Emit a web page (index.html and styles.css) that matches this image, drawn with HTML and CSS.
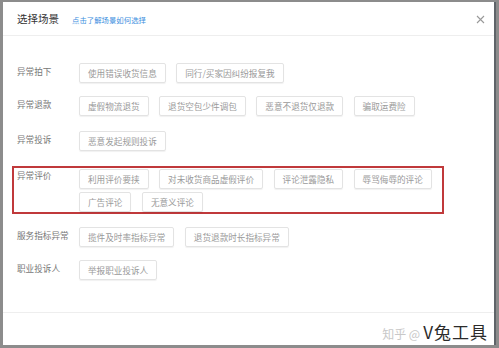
FILE: index.html
```html
<!DOCTYPE html>
<html lang="zh">
<head>
<meta charset="utf-8">
<link rel="stylesheet" href="styles.css">
</head>
<body>
<div class="modal">
  <div class="header">
    <span class="title">选择场景</span>
    <a class="help">点击了解场景如何选择</a>
    <span class="close">
      <svg width="9" height="9" viewBox="0 0 9 9"><path d="M1 1L8 8M8 1L1 8" stroke="#999" stroke-width="1.1" fill="none"/></svg>
    </span>
  </div>
  <div class="content">
    <div class="row">
      <div class="label">异常拍下</div>
      <div class="btns">
        <span class="btn">使用错误收货信息</span>
        <span class="btn">同行/买家因纠纷报复我</span>
      </div>
    </div>
    <div class="row">
      <div class="label">异常退款</div>
      <div class="btns">
        <span class="btn">虚假物流退货</span>
        <span class="btn">退货空包少件调包</span>
        <span class="btn">恶意不退货仅退款</span>
        <span class="btn">骗取运费险</span>
      </div>
    </div>
    <div class="row">
      <div class="label">异常投诉</div>
      <div class="btns">
        <span class="btn">恶意发起规则投诉</span>
      </div>
    </div>
    <div class="row highlight">
      <div class="label">异常评价</div>
      <div class="btns">
        <span class="btn">利用评价要挟</span>
        <span class="btn">对未收货商品虚假评价</span>
        <span class="btn">评论泄露隐私</span>
        <span class="btn">辱骂侮辱的评论</span>
        <span class="btn">广告评论</span>
        <span class="btn">无意义评论</span>
      </div>
    </div>
    <div class="row">
      <div class="label">服务指标异常</div>
      <div class="btns">
        <span class="btn">揽件及时率指标异常</span>
        <span class="btn">退货退款时长指标异常</span>
      </div>
    </div>
    <div class="row">
      <div class="label">职业投诉人</div>
      <div class="btns">
        <span class="btn">举报职业投诉人</span>
      </div>
    </div>
  </div>
  <div class="footer"></div>
  <div class="watermark"><span class="wm-light">知乎 @</span><span class="wm-dark">V兔工具</span></div>
</div>
</body>
</html>
```
FILE: styles.css
```css
html, body {
  margin: 0;
  padding: 0;
}
body {
  background: #8c8c8c;
  width: 499px;
  height: 348px;
  overflow: hidden;
  font-family: "Noto Sans CJK SC", "Noto Sans", sans-serif;
}
.modal {
  position: relative;
  margin: 2px 0 0 3px;
  width: 493px;
  height: 343px;
  background: #fff;
  border-right: 2px solid #5f6469;
  box-sizing: border-box;
  display: flex;
  flex-direction: column;
}
.header {
  height: 34px;
  border-bottom: 1px solid #eeeeee;
  display: flex;
  align-items: center;
  padding-left: 14px;
  box-sizing: border-box;
}
.title {
  font-size: 10.5px;
  color: #333;
}
.help {
  font-size: 7.4px;
  color: #3d8fe0;
  margin-left: 13px;
  margin-top: 1px;
}
.close {
  margin-left: auto;
  margin-right: 9px;
  display: flex;
  margin-top: 2px;
}
.content {
  flex: 1;
  padding-top: 27px;
  display: flex;
  flex-direction: column;
}
.row {
  display: flex;
  padding-left: 14px;
  margin-bottom: 13px;
}
.row:nth-child(2) {
  margin-bottom: 15px;
}
.row:nth-child(3) {
  margin-bottom: 15px;
}
.label {
  width: 62px;
  flex: none;
  font-size: 8.6px;
  color: #777;
  line-height: 16px;
}
.btns {
  display: flex;
  flex-wrap: wrap;
  gap: 3px 10.5px;
  max-width: 375px;
}
.btn {
  height: 20px;
  box-sizing: border-box;
  padding: 0 8px;
  border: 1px solid #e3e3e3;
  border-radius: 2px;
  box-shadow: 0 1px 1px rgba(0,0,0,0.06);
  font-size: 8.6px;
  line-height: 18px;
  color: #9a9a9a;
  white-space: nowrap;
}
.highlight {
  margin-left: 9px;
  width: 432px;
  box-sizing: border-box;
  border: 2px solid #c0393b;
  padding: 1px 2px 0 3px;
  height: 48px;
}
.highlight .label {
  line-height: 12px;
}
.footer {
  height: 32px;
  border-top: 1px solid #eeeeee;
  flex: none;
}
.watermark {
  position: absolute;
  right: 6px;
  bottom: 1px;
  line-height: 20px;
  white-space: nowrap;
  display: flex;
  align-items: baseline;
}
.wm-light {
  color: #c8c8c8;
  font-size: 12px;
  margin-right: 3px;
}
.wm-dark {
  color: #2b2b2b;
  font-size: 17px;
  letter-spacing: 1px;
}
```
